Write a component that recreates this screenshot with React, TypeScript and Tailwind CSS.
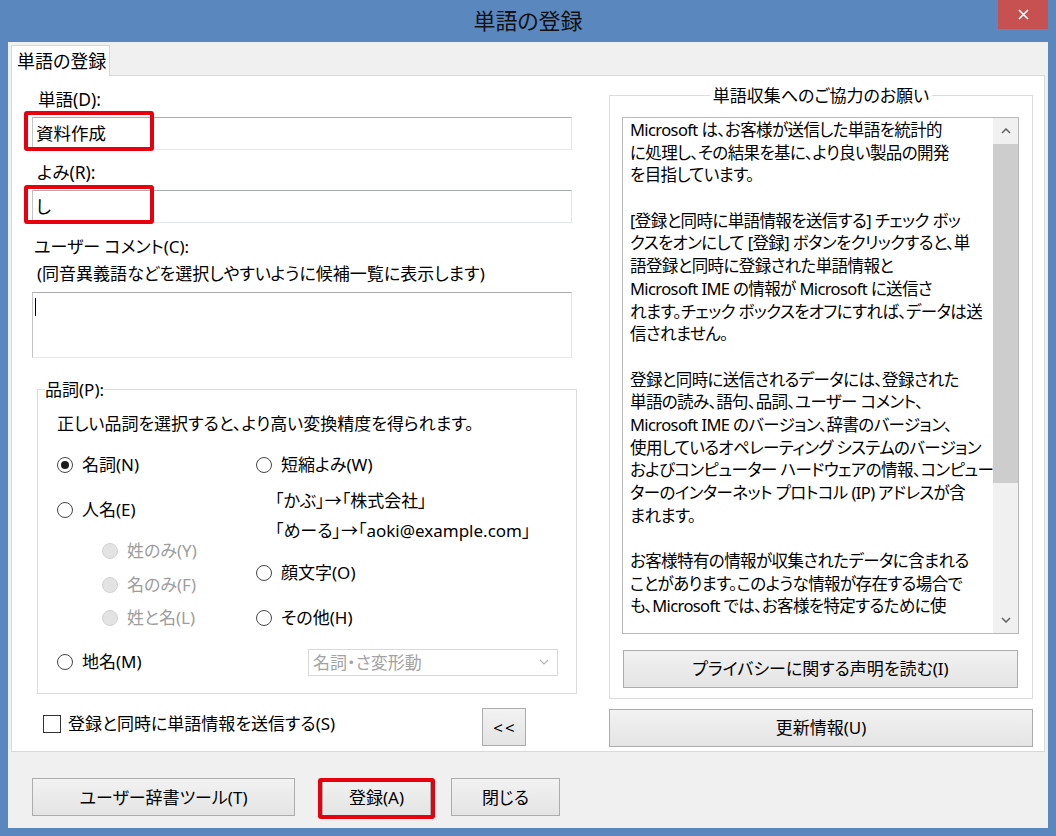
import React from "react";

const FONT = "[font-family:'Noto_Sans','Noto_Sans_CJK_JP',sans-serif] [font-feature-settings:'palt']";

const NOTICE = [
  "Microsoft は、お客様が送信した単語を統計的",
  "に処理し、その結果を基に、より良い製品の開発",
  "を目指しています。",
  "",
  "[登録と同時に単語情報を送信する] チェック ボッ",
  "クスをオンにして [登録] ボタンをクリックすると、単",
  "語登録と同時に登録された単語情報と",
  "Microsoft IME の情報が Microsoft に送信さ",
  "れます。チェック ボックスをオフにすれば、データは送",
  "信されません。",
  "",
  "登録と同時に送信されるデータには、登録された",
  "単語の読み、語句、品詞、ユーザー コメント、",
  "Microsoft IME のバージョン、辞書のバージョン、",
  "使用しているオペレーティング システムのバージョン",
  "およびコンピューター ハードウェアの情報、コンピュー",
  "ターのインターネット プロトコル (IP) アドレスが含",
  "まれます。",
  "",
  "お客様特有の情報が収集されたデータに含まれる",
  "ことがあります。このような情報が存在する場合で",
  "も、Microsoft では、お客様を特定するために使",
];

function Radio({
  label,
  checked = false,
  disabled = false,
}: {
  label: string;
  checked?: boolean;
  disabled?: boolean;
}) {
  return (
    <div className="flex items-center h-[24px]">
      <span
        className={`w-[16px] h-[16px] rounded-full border flex items-center justify-center shrink-0 ${
          disabled ? "bg-[#e3e3e3] border-[#d2d2d2]" : "bg-white border-[#474747]"
        }`}
      >
        {checked && <span className="w-[8px] h-[8px] rounded-full bg-[#1c1c1c]" />}
      </span>
      <span
        className={`ml-[9px] leading-[24px] whitespace-nowrap ${
          disabled ? "text-[#9d9d9d]" : "text-black"
        }`}
      >
        {label}
      </span>
    </div>
  );
}

function Button({ children, className = "" }: { children: React.ReactNode; className?: string }) {
  return (
    <button
      className={`h-[38px] border border-[#acacac] bg-linear-to-b from-[#f2f2f2] to-[#e4e4e4] text-black leading-[23px] flex items-center justify-center whitespace-nowrap ${className}`}
    >
      {children}
    </button>
  );
}

function Field({ value, children }: { value: string; children?: React.ReactNode }) {
  return (
    <div className="relative h-[33px] w-[540px] bg-white border border-t-[#abadb3] border-l-[#c2c4ca] border-r-[#e3e5e9] border-b-[#e3e5e9] flex items-center pl-[3px]">
      <span className="leading-[23px] text-[17.5px]">{value}</span>
      {children}
    </div>
  );
}

export default function App() {
  return (
    <div className={`w-[1056px] h-[836px] bg-[#5b87bf] flex flex-col text-[17px] text-black ${FONT}`}>
      {/* title bar */}
      <div className="h-[42px] grid grid-cols-[1fr_auto_1fr]">
        <div />
        <div className="flex items-center pb-[2px] text-[22px] leading-[28px] text-[#111]">単語の登録</div>
        <div className="flex justify-end items-start pr-[8px]">
          <div className="w-[50px] h-[29px] bg-[#c75050] flex items-center justify-center">
            <svg width="11" height="11" viewBox="0 0 11 11">
              <path d="M1 1 L10 10 M10 1 L1 10" stroke="#fff" strokeWidth="1.6" fill="none" />
            </svg>
          </div>
        </div>
      </div>

      {/* client area */}
      <div className="mx-[8px] h-[786px] bg-[#f0f0f0] flex flex-col">
        <div className="pl-[3px] pt-[3px] flex">
          <div className="relative z-10 w-[99px] h-[31px] bg-white border border-b-0 border-[#d9d9d9] pl-[5px] flex items-center text-[18px] leading-[24px]">
            単語の登録
          </div>
        </div>

        <div className="mx-[3px] -mt-[1px] h-[677px] bg-white border border-[#d9d9d9] pl-[20px] pt-[8px] flex">
          {/* left column */}
          <div className="w-[545px] pt-[4px] flex flex-col">
            <div className="pl-[6px] leading-[23px] h-[23px] text-[17.5px]">単語(D):</div>
            <div className="mt-[6px]">
              <Field value="資料作成">
                <span className="absolute left-[-9px] top-[-7px] w-[130px] h-[40px] border-[4px] border-[#e8000e] rounded-[3px] pointer-events-none" />
              </Field>
            </div>
            <div className="mt-[11px] pl-[5px] leading-[23px] h-[23px] text-[17.5px]">よみ(R):</div>
            <div className="mt-[6px]">
              <Field value="し">
                <span className="absolute left-[-9px] top-[-6px] w-[130px] h-[39px] border-[4px] border-[#e8000e] rounded-[3px] pointer-events-none" />
              </Field>
            </div>
            <div className="mt-[12px] pl-[2px] leading-[23px] h-[23px]">ユーザー コメント(C):</div>
            <div className="mt-[4px] pl-[5px] leading-[23px] h-[23px] whitespace-nowrap">(同音異義語などを選択しやすいように候補一覧に表示します)</div>
            <div className="mt-[7px] h-[66px] w-[540px] bg-white border border-t-[#abadb3] border-l-[#c2c4ca] border-r-[#e3e5e9] border-b-[#e3e5e9] pl-[2px] pt-[5px]">
              <div className="w-[1px] h-[18px] bg-black" />
            </div>

            <fieldset className="mt-[19.5px] ml-[5px] w-[540px] border border-[#dcdcdc]">
              <legend className="ml-[7px] leading-[23px]">品詞(P):</legend>
              <div className="pl-[19px] pr-[18px] pb-[17px]">
                <p className="mt-[11px] leading-[23px] h-[23px] whitespace-nowrap">
                  正しい品詞を選択すると、より高い変換精度を得られます。
                </p>
                <div className="mt-[18px] flex">
                  <div className="w-[199px] flex flex-col">
                    <Radio label="名詞(N)" checked />
                    <div className="mt-[21px]">
                      <Radio label="人名(E)" />
                    </div>
                    <div className="mt-[17px] ml-[45px]">
                      <Radio label="姓のみ(Y)" disabled />
                    </div>
                    <div className="mt-[10px] ml-[45px]">
                      <Radio label="名のみ(F)" disabled />
                    </div>
                    <div className="mt-[9px] ml-[45px]">
                      <Radio label="姓と名(L)" disabled />
                    </div>
                  </div>
                  <div className="flex flex-col">
                    <Radio label="短縮よみ(W)" />
                    <div className="mt-[12px] ml-[19px] leading-[24px] h-[24px] whitespace-nowrap">「かぶ」→「株式会社」</div>
                    <div className="mt-[6px] ml-[19px] leading-[24px] h-[24px] whitespace-nowrap">「めーる」→「aoki@example.com」</div>
                    <div className="mt-[18px]">
                      <Radio label="顔文字(O)" />
                    </div>
                    <div className="mt-[21px]">
                      <Radio label="その他(H)" />
                    </div>
                  </div>
                </div>
                <div className="mt-[19px] h-[27px] flex items-center justify-between">
                  <Radio label="地名(M)" />
                  <div className="w-[250px] h-[27px] bg-white border border-[#d9d9d9] flex items-center pl-[4px] pr-[8px] justify-between text-[#a3a3a3]">
                    <span className="leading-[23px]">名詞・さ変形動</span>
                    <svg width="10" height="6" viewBox="0 0 10 6">
                      <path d="M1 1 L5 5 L9 1" stroke="#b4b4b4" strokeWidth="1.2" fill="none" />
                    </svg>
                  </div>
                </div>
              </div>
            </fieldset>

            <div className="mt-[14.5px] h-[38px] flex items-center justify-between pr-[51px]">
              <div className="flex items-center ml-[11px] mb-[7px]">
                <span className="w-[18px] h-[18px] bg-white border border-[#333]" />
                <span className="ml-[7px] leading-[23px] whitespace-nowrap">登録と同時に単語情報を送信する(S)</span>
              </div>
              <Button className="w-[44px] text-[17px] tracking-[2px] pl-[2px]">&lt;&lt;</Button>
            </div>
          </div>

          {/* right column */}
          <div className="ml-[32px] w-[424px] flex flex-col">
            <fieldset className="border border-[#dcdcdc] px-[12px] pb-[10.5px]">
              <legend className="mx-auto px-[3px] leading-[23px]">単語収集へのご協力のお願い</legend>
              <div className="mt-[9.5px] h-[517px] w-[397px] bg-white border border-[#b9b9b9] flex">
                <div className="flex-1 pl-[7px] pt-[1.5px] overflow-hidden text-[16.5px] tracking-[-0.6px]">
                  {NOTICE.map((line, i) => (
                    <div key={i} className="h-[22.7px] leading-[22.7px] whitespace-nowrap">
                      {line || "\u00a0"}
                    </div>
                  ))}
                </div>
                <div className="w-[25px] bg-[#f0f0f0] flex flex-col">
                  <div className="h-[26px] flex items-center justify-center">
                    <svg width="10" height="6" viewBox="0 0 10 6">
                      <path d="M1 5 L5 1 L9 5" stroke="#606060" strokeWidth="1.5" fill="none" />
                    </svg>
                  </div>
                  <div className="h-[339px] bg-[#cdcdcd]" />
                  <div className="flex-1" />
                  <div className="h-[26px] flex items-center justify-center">
                    <svg width="10" height="6" viewBox="0 0 10 6">
                      <path d="M1 1 L5 5 L9 1" stroke="#606060" strokeWidth="1.5" fill="none" />
                    </svg>
                  </div>
                </div>
              </div>
              <Button className="mt-[16px] ml-[1px] w-[395px]">プライバシーに関する声明を読む(I)</Button>
            </fieldset>
            <Button className="mt-[9.5px] w-[424px]">更新情報(U)</Button>
          </div>
        </div>

        {/* bottom buttons */}
        <div className="mt-[26px] pl-[24px] flex">
          <Button className="w-[263px]">ユーザー辞書ツール(T)</Button>
          <div className="relative ml-[27px]">
            <Button className="w-[109px]">登録(A)</Button>
            <span className="absolute left-[-4px] right-[-4px] top-0 bottom-[-3px] border-[4px] border-[#e8000e] rounded-[3px] pointer-events-none" />
          </div>
          <Button className="ml-[20px] w-[109px]">閉じる</Button>
        </div>
      </div>
    </div>
  );
}
